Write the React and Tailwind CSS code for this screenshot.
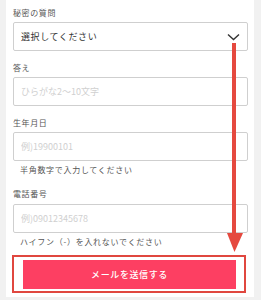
import React from 'react';

const font = { fontFamily: '"Noto Sans CJK JP", "Noto Sans", sans-serif' };

const Label = ({ children, className = '' }) => (
  <div className={`text-[8px] leading-[10px] tracking-[0.6px] text-[#555] ${className}`}>{children}</div>
);

const Field = ({ placeholder }) => (
  <input
    type="text"
    placeholder={placeholder}
    className="block h-[29px] w-[235px] rounded-[2px] border border-[#cfcfcf] bg-white px-[7px] text-[9px] text-[#333] outline-none placeholder:text-[#d0d0d0]"
  />
);

const Hint = ({ children }) => (
  <div className="ml-[7px] mt-[4px] text-[8px] leading-[10px] tracking-[0.7px] text-[#555]">{children}</div>
);

export default function App() {
  return (
    <div className="relative h-[300px] w-[261px] overflow-hidden bg-[#f1f1f1]" style={font}>
      <div className="ml-[6px] w-[248px] bg-white pl-[7px] pt-[8px] pb-[2px]">
        <Label>秘密の質問</Label>
        <div className="mt-[4px] flex h-[29px] w-[235px] items-center justify-between rounded-[2px] border border-[#cfcfcf] pl-[7px] pr-[7px]">
          <span className="text-[9px] tracking-[0.6px] text-[#333]">選択してください</span>
          <svg width="13" height="8" viewBox="0 0 13 8" className="mr-[0px]">
            <path d="M1 1.5 L6.5 6.5 L12 1.5" fill="none" stroke="#333" strokeWidth="1.4" />
          </svg>
        </div>

        <Label className="mt-[12px]">答え</Label>
        <div className="mt-[4px]">
          <Field placeholder="ひらがな2〜10文字" />
        </div>

        <Label className="mt-[12px]">生年月日</Label>
        <div className="mt-[4px]">
          <Field placeholder="例)19900101" />
        </div>
        <Hint>半角数字で入力してください</Hint>

        <Label className="mt-[14px]">電話番号</Label>
        <div className="mt-[5px]">
          <Field placeholder="例)09012345678" />
        </div>
        <Hint>ハイフン（-）を入れないでください</Hint>

        <button className="ml-[10px] mt-[13px] mb-[6px] flex h-[29px] w-[213px] items-center justify-center bg-[#fd3f62] text-[9px] font-medium tracking-[0.6px] text-white">
          メールを送信する
        </button>
      </div>

      {/* annotation: outline + arrow */}
      <div className="absolute left-[12px] top-[255px] h-[38px] w-[234px] border-2 border-[#e0473f]" />
      <svg className="absolute left-[226px] top-[43px]" width="18" height="210" viewBox="0 0 18 210">
        <rect x="6" y="0" width="4" height="192" fill="#e5493f" />
        <polygon points="1,190 17,190 8.5,209" fill="#e5493f" />
      </svg>
    </div>
  );
}
